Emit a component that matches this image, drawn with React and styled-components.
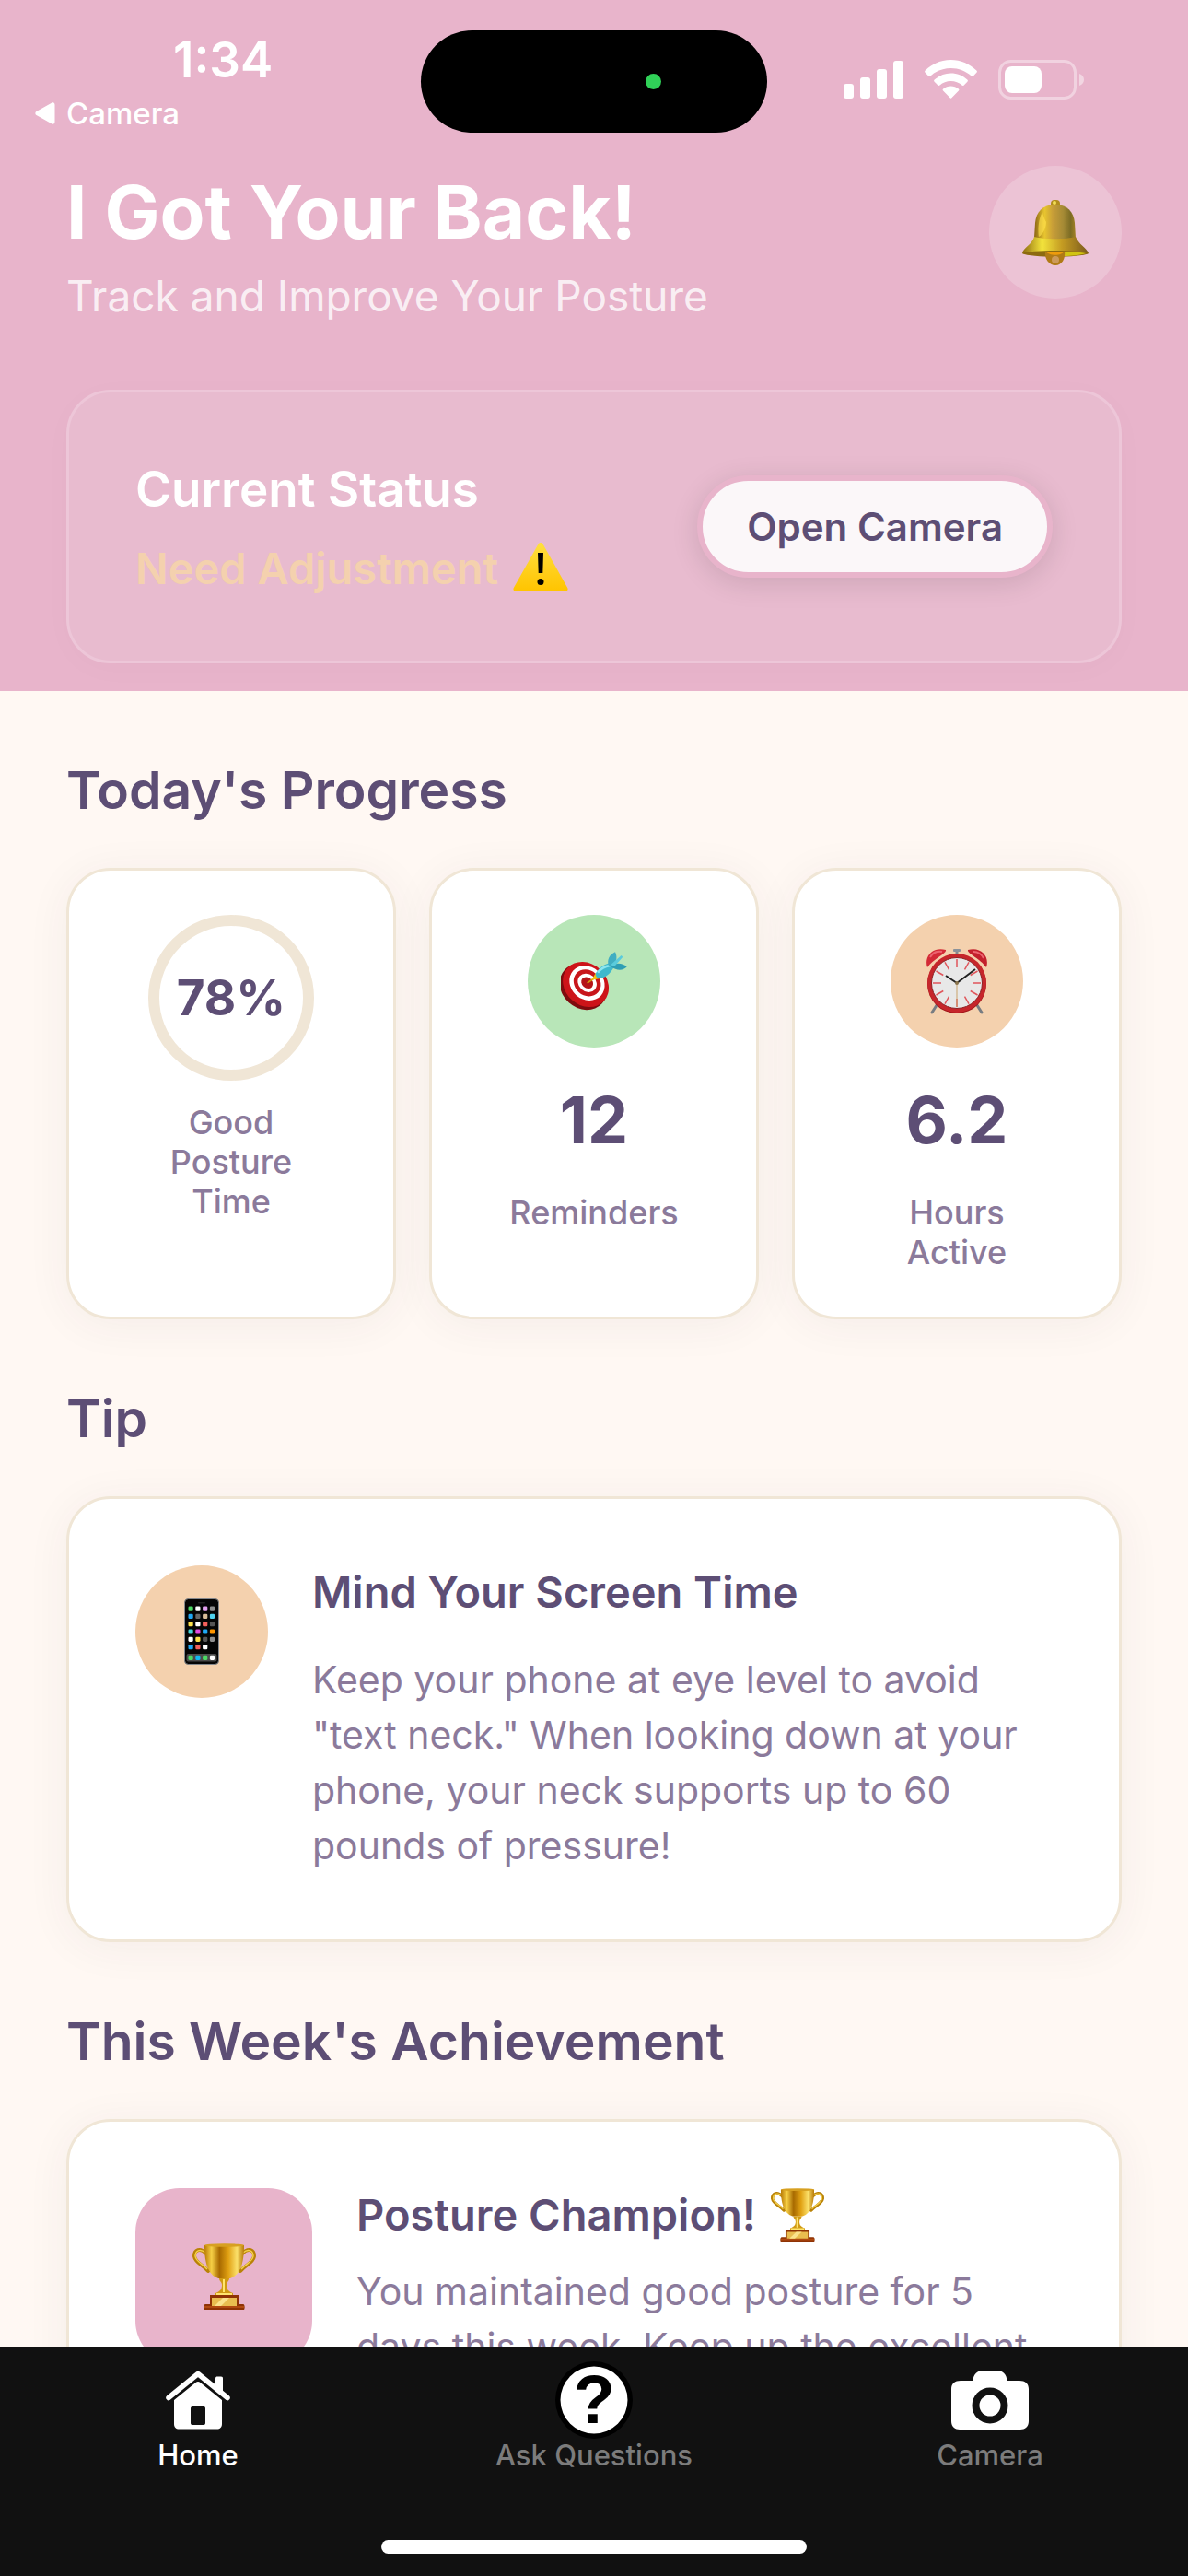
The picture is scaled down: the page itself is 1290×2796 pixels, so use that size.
import styled, { createGlobalStyle } from "styled-components";

function App() {
  return (
    <>
      <GlobalStyle />
      <Screen>
        <Scroll>
          <Header>
            <StatusBar>
              <StatusLeft>
                <Time>1:34</Time>
                <BackLink href="#camera">
                  <BackArrow />
                  Camera
                </BackLink>
              </StatusLeft>
              <Island>
                <IslandDot />
              </Island>
              <StatusRight>
                <SignalIcon />
                <WifiIcon />
                <BatteryIcon />
              </StatusRight>
            </StatusBar>
            <HeaderRow>
              <div>
                <Title>I Got Your Back!</Title>
                <Subtitle>Track and Improve Your Posture</Subtitle>
              </div>
              <BellButton type="button" aria-label="Notifications">
                <BellIcon />
              </BellButton>
            </HeaderRow>
            <StatusCard>
              <div>
                <StatusTitle>Current Status</StatusTitle>
                <StatusText>
                  Need Adjustment
                  <WarningIcon />
                </StatusText>
              </div>
              <CameraButton type="button">Open Camera</CameraButton>
            </StatusCard>
          </Header>
          <Main>
            <SectionTitle>Today's Progress</SectionTitle>
            <ProgressGrid>
              <ProgressCard>
                <Ring>78%</Ring>
                <RingLabel>Good Posture Time</RingLabel>
              </ProgressCard>
              <ProgressCard>
                <Circle $color="#b8e6b8">
                  <TargetIcon />
                </Circle>
                <Value>12</Value>
                <Label>Reminders</Label>
              </ProgressCard>
              <ProgressCard>
                <Circle $color="#f4d1ae">
                  <ClockIcon />
                </Circle>
                <Value>6.2</Value>
                <Label>Hours Active</Label>
              </ProgressCard>
            </ProgressGrid>

            <SectionTitle>Tip</SectionTitle>
            <InfoCard>
              <Circle $color="#f4d1ae">
                <PhoneIcon />
              </Circle>
              <InfoContent $gap="36px">
                <InfoTitle>Mind Your Screen Time</InfoTitle>
                <InfoText>
                  Keep your phone at eye level to avoid "text neck." When
                  looking down at your phone, your neck supports up to 60 pounds
                  of pressure!
                </InfoText>
              </InfoContent>
            </InfoCard>

            <SectionTitle>This Week's Achievement</SectionTitle>
            <InfoCard>
              <Badge>
                <TrophyIcon width="69" height="72" />
              </Badge>
              <InfoContent $gap="24px">
                <InfoTitle>
                  Posture Champion!
                  <TrophyIcon width="58" height="58" />
                </InfoTitle>
                <InfoText>
                  You maintained good posture for 5 days this week. Keep up the
                  excellent
                </InfoText>
              </InfoContent>
            </InfoCard>
          </Main>
        </Scroll>
        <TabBar>
          <Tabs>
            <Tab href="#home" $active>
              <TabIcon>
                <HomeIcon />
              </TabIcon>
              Home
            </Tab>
            <Tab href="#questions">
              <TabIcon>
                <QuestionIcon />
              </TabIcon>
              Ask Questions
            </Tab>
            <Tab href="#camera">
              <TabIcon>
                <CameraIcon />
              </TabIcon>
              Camera
            </Tab>
          </Tabs>
          <HomeIndicator />
        </TabBar>
      </Screen>
    </>
  );
}

export default App;

function BackArrow() {
  return (
    <svg width="22" height="24" viewBox="0 0 22 24" fill="#fff">
      <path d="M18 0.700 1.500 10a2.300 2.300 0 0 0 0 4L18 23.300c2 1 3.500 0 3.500-2V2.700c0-2-1.500-3-3.500-2Z" />
    </svg>
  );
}

function SignalIcon() {
  return (
    <svg width="65" height="42" viewBox="0 0 65 42" fill="#fff">
      <rect x="0" y="26" width="11" height="16" rx="3" />
      <rect x="18" y="19" width="11" height="23" rx="3" />
      <rect x="36" y="10" width="11" height="32" rx="3" />
      <rect x="54" y="1" width="11" height="41" rx="3" />
    </svg>
  );
}

function WifiIcon() {
  return (
    <svg width="57" height="42" viewBox="0 0 57 42" fill="#fff">
      <path d="M28.500 0C39 0 49 4.200 56.300 11.600c.8.800.8 1.500.1 2.200l-3.500 3.600c-.7.700-1.400.7-2.200 0C44.700 12 37 8.900 28.500 8.900S12.300 12 6.300 17.400c-.8.700-1.500.7-2.200 0L.6 13.800c-.7-.7-.7-1.400.1-2.200C8 4.200 18 0 28.500 0Z" />
      <path d="M28.500 14.500c6.700 0 13 2.600 17.800 7 .8.700.8 1.400.1 2.200l-3.700 3.700c-.7.700-1.400.7-2.200.1-3.200-2.800-7.400-4.500-12-4.500s-8.800 1.700-12 4.500c-.8.600-1.500.6-2.200-.1l-3.700-3.700c-.7-.8-.7-1.500.1-2.200 4.800-4.400 11.100-7 17.800-7Z" />
      <path d="M28.500 28.500c3.100 0 6 1.100 8.300 3 .8.700.8 1.400.1 2.100l-7.300 7.500c-.7.700-1.500.7-2.200 0l-7.300-7.500c-.7-.7-.7-1.400.1-2.100 2.300-1.900 5.200-3 8.300-3Z" />
    </svg>
  );
}

function BatteryIcon() {
  return (
    <svg width="94" height="43" viewBox="0 0 94 43">
      <rect x="1.500" y="1.500" width="82" height="40" rx="12" fill="none" stroke="#fff" strokeOpacity="0.4" strokeWidth="3" />
      <rect x="7" y="7" width="40" height="29" rx="8" fill="#fff" />
      <path d="M88 15c3 1 5 3.500 5 6.500S91 27 88 28Z" fill="#fff" fillOpacity="0.45" />
    </svg>
  );
}

function BellIcon() {
  return (
    <svg width="72" height="71" viewBox="0 0 72 71">
      <defs>
        <linearGradient id="bellBody">
          <stop offset="0" stopColor="#8a6414" />
          <stop offset="0.25" stopColor="#e8c52f" />
          <stop offset="0.45" stopColor="#c79d38" />
          <stop offset="0.7" stopColor="#a58a35" />
          <stop offset="0.88" stopColor="#7c6c24" />
          <stop offset="1" stopColor="#a38126" />
        </linearGradient>
        <linearGradient id="bellRim">
          <stop offset="0" stopColor="#8d6a10" />
          <stop offset="0.3" stopColor="#f3e43c" />
          <stop offset="0.6" stopColor="#c49b22" />
          <stop offset="1" stopColor="#7a5a1e" />
        </linearGradient>
      </defs>
      <rect x="31" y="0" width="10" height="9" rx="4" fill="#b18d1d" />
      <rect x="33" y="1" width="4" height="4" rx="2" fill="#f1dc55" />
      <path d="M36 5C22 5 15 13 14 25L13 41c6 6 39 6 45 0L57 25C56 13 49 5 36 5Z" fill="url(#bellBody)" />
      <path d="M13 40C11 48 1 52 0 58c10 4 62 4 72 0-2-6-11-10-14-18-10 3-35 3-45 0Z" fill="url(#bellRim)" />
      <path d="M0 58c8-4 64-4 72 0-10 5-62 5-72 0Z" fill="#8d6a10" />
      <path d="M45 57c9-1 20 0 24 1-6 2-15 3-24 3Z" fill="#d1c413" />
      <path d="M22 13c-5 8-5 22-4 27 5-3 8-10 8-16-2-3-3-7-4-11Z" fill="#ffe14d" opacity="0.65" />
      <path d="M25 56h21c1 8-3 15-10 15s-12-7-11-15Z" fill="#b07a16" />
      <path d="M26 56h19c-2 5-16 5-19 0Z" fill="#ee9b0c" />
      <circle cx="36" cy="65" r="4" fill="#d9a878" opacity="0.7" />
    </svg>
  );
}

function WarningIcon() {
  return (
    <svg width="60" height="54" viewBox="0 0 60 54">
      <defs>
        <linearGradient id="warn" x2="0" y2="1">
          <stop offset="0" stopColor="#ffdf40" />
          <stop offset="1" stopColor="#ffc400" />
        </linearGradient>
      </defs>
      <path d="M27.500 2.500c1-2 4-2 5 0L59.200 50c1 2 0 3.500-2 3.500H2.800c-2 0-3-1.500-2-3.500Z" fill="url(#warn)" />
      <path d="M27 12h6l-.7 22h-4.600Z" fill="#000" />
      <circle cx="30" cy="43.500" r="3.500" fill="#000" />
    </svg>
  );
}

function TargetIcon() {
  return (
    <svg width="72" height="64" viewBox="0 0 216 192">
      <g transform="rotate(42 75 109)">
        <ellipse cx="77" cy="114" rx="82" ry="70" fill="#7e0b0e" />
        <ellipse cx="78" cy="103" rx="80" ry="68" fill="#cd1419" />
        <ellipse cx="78" cy="97" rx="61" ry="53" fill="#fff" />
        <ellipse cx="78" cy="96" rx="47" ry="41" fill="#c8161b" />
        <ellipse cx="78" cy="96" rx="33" ry="28" fill="#fff" />
        <ellipse cx="78" cy="96" rx="21" ry="17" fill="#b51418" />
      </g>
      <path d="M86 102 112 84" stroke="#d39a0c" strokeWidth="5" />
      <path d="m100 92 13-22 16 17Z" fill="#f2c40f" />
      <path d="M113 72c9-18 26-33 53-36l6 16c-12 21-28 34-46 36-8-2-13-8-13-16Z" fill="#3fb9cd" />
      <path d="M120 68c10-13 23-20 40-23" stroke="#8be6ef" strokeWidth="8" fill="none" />
      <path d="M155 44c-5-18 3-34 22-43 7 14 6 33-8 46Z" fill="#40aec2" />
      <path d="M166 45c15-11 36-8 49 4-12 14-34 13-51 0Z" fill="#2f9eb4" />
      <path d="m162 43 35-31 5 5-27 30Z" fill="#5acbdc" />
    </svg>
  );
}

function ClockIcon() {
  const ticks = [0, 30, 60, 90, 120, 150, 180, 210, 240, 270, 300, 330];
  return (
    <svg width="70" height="72" viewBox="0 0 70 72">
      <path d="m15 59-7 11M55 59l7 11" stroke="#777c82" strokeWidth="3" strokeLinecap="round" />
      <path d="M35 3v8" stroke="#858a90" strokeWidth="3" />
      <rect x="31" y="1" width="8" height="3" rx="1" fill="#8b929a" />
      <path d="M3 21C-1 9 9-2 23 2c1 4-13 9-20 19Z" fill="#d32a36" />
      <path d="M67 21C71 9 61-2 47 2c-1 4 13 9 20 19Z" fill="#c3202d" />
      <path d="M6 10c3-5 8-7 13-6M53 4c5 0 9 3 11 7" stroke="#ec6470" strokeWidth="2" fill="none" />
      <circle cx="35" cy="39" r="32" fill="#9f1519" />
      <circle cx="35" cy="38" r="32" fill="#c6262b" />
      <circle cx="35" cy="38" r="27.500" fill="#e8e8e8" stroke="#8b2023" strokeWidth="1" />
      {ticks.map((deg) => (
        <path key={deg} d="M35 12v9" stroke="#e0555b" strokeWidth="1.500" transform={`rotate(${deg} 35 38)`} />
      ))}
      <path d="M35 38v26" stroke="#c9a36a" strokeWidth="1" />
      <path d="m35 38-12-8M35 38l20-15" stroke="#222" strokeWidth="2" />
      <circle cx="35" cy="38" r="2" fill="#8a744c" />
    </svg>
  );
}

const APP_ROWS = [
  ["#4cd964", "#fff", "#e3a0f0", "#8e8e8e"],
  ["#1fa8f5", "#666", "#d8bd98", "#4fd2ee"],
  ["#fbe04b", "#fff", "#f4605c", "#555"],
  ["#44d7dc", "#e24ae0", "#1fa8f5", "#ff9500"],
  ["#fff", "#fbe04b", "#555", "#8e8e8e"],
  ["#1fa8f5", "#f4605c", "#fff"],
];
const DOCK = ["#4cd964", "#13b8f3", "#4cd964", "#fff"];

function PhoneIcon() {
  return (
    <svg width="38" height="72" viewBox="0 0 38 72">
      <rect x="0.500" y="0.500" width="37" height="71" rx="4" fill="#050505" stroke="#85898e" />
      <rect x="15" y="4" width="8" height="1.500" rx="0.700" fill="#222" />
      {APP_ROWS.map((row, r) =>
        row.map((color, c) => (
          <rect key={`${r}-${c}`} x={4.5 + c * 7.8} y={8.5 + r * 8.3} width="5.200" height="5.200" rx="1.300" fill={color} />
        ))
      )}
      <rect x="2.500" y="60" width="33" height="8.500" rx="2" fill="#4a4a4a" />
      {DOCK.map((color, c) => (
        <rect key={c} x={4.5 + c * 7.8} y="61.700" width="5.200" height="5.200" rx="1.300" fill={color} />
      ))}
    </svg>
  );
}

function TrophyIcon({ width, height }) {
  return (
    <svg width={width} height={height} viewBox="0 0 69 72" preserveAspectRatio="none">
      <defs>
        <linearGradient id="cup">
          <stop offset="0" stopColor="#b97a05" />
          <stop offset="0.18" stopColor="#f6cf45" />
          <stop offset="0.38" stopColor="#a86a00" />
          <stop offset="0.6" stopColor="#e0a012" />
          <stop offset="0.82" stopColor="#fbe06a" />
          <stop offset="1" stopColor="#b87a08" />
        </linearGradient>
      </defs>
      <path d="M15 11C8 4 2 7 2 14c1 7 9 9 15 16M54 11c7-7 13-4 13 3-1 7-9 9-15 16" fill="none" stroke="#b98207" strokeWidth="4" strokeLinecap="round" />
      <path d="M14 10C8 5 3 8 3 14c1 6 8 8 13 14M55 10c6-5 11-2 11 4-1 6-8 8-13 14" fill="none" stroke="#f4d04c" strokeWidth="1.500" />
      <path d="M13 2h43c0 17-3 32-15 36H28C16 34 13 19 13 2Z" fill="url(#cup)" />
      <ellipse cx="34.500" cy="2" rx="21.500" ry="1.800" fill="#d7a021" />
      <path d="M29 38h11c0 3-3 4-3 7 0 5 2 7 7 9v3H25v-3c5-2 7-4 7-9 0-3-3-4-3-7Z" fill="#d19a13" />
      <path d="M34 39v14M26 55h17" stroke="#ffe56e" strokeWidth="2" />
      <path d="M19 56h31v10h5c2 0 2 5 1 6H13c-1-1-1-6 1-6h5Z" fill="#8f3305" />
      <path d="M13 68h43v2H13Z" fill="#b14a10" />
      <rect x="21" y="59" width="27" height="9" fill="#e9bd4f" />
      <path d="m24 68 9-9h7l-9 9Z" fill="#fbe28b" />
    </svg>
  );
}

function HomeIcon() {
  return (
    <svg width="70" height="64" viewBox="0 0 70 64">
      <path d="M54 8.500C54 7 55 6.500 56 6.500h4c1.500 0 2 .7 2 2V25l-8-7Z" fill="#fff" />
      <path d="M3 29.500 35 3.500l32 26" fill="none" stroke="#fff" strokeWidth="5.500" strokeLinecap="round" strokeLinejoin="round" />
      <path fillRule="evenodd" d="M32.500 13c1.700-1.500 3.300-1.500 5 0L61 32v26c0 3.500-2 5.500-5.500 5.500h-41C11 63.500 9 61.500 9 58V32ZM29 39c-1 0-2 .7-2 2v16c0 1.300.7 2 2 2h12c1.300 0 2-.7 2-2V41c0-1.300-.7-2-2-2Z" fill="#fff" />
    </svg>
  );
}

function QuestionIcon() {
  return (
    <svg width="84" height="84" viewBox="0 0 84 84">
      <circle cx="42" cy="42" r="42" fill="#000" />
      <circle cx="42" cy="42" r="36.500" fill="#fff" />
      <text x="42" y="67" textAnchor="middle" fontFamily="Liberation Sans, sans-serif" fontWeight="700" fontSize="74">
        ?
      </text>
    </svg>
  );
}

function CameraIcon() {
  return (
    <svg width="84" height="64" viewBox="0 0 84 64">
      <path d="M0 20C0 14 4 11 10 11h13.500C24 4 28 0 34 0h16c6 0 10 4 10.500 11H74c6 0 10 3 10 9v35c0 6-4 9-9 9H9c-5 0-9-3-9-9Z" fill="#fff" />
      <circle cx="42" cy="38" r="19.500" fill="#111" />
      <circle cx="42" cy="38" r="11.500" fill="#fff" />
    </svg>
  );
}

const GlobalStyle = createGlobalStyle`
  * {
    box-sizing: border-box;
  }

  body {
    margin: 0;
    background: #fff8f3;
    font-family: Inter, "Liberation Sans", sans-serif;
  }

  h1, h2, h3, p {
    margin: 0;
  }

  a {
    text-decoration: none;
  }

  svg {
    display: block;
    flex-shrink: 0;
  }
`;

const Screen = styled.div`
  display: flex;
  flex-direction: column;
  height: 100vh;
`;

const Scroll = styled.div`
  flex: 1;
  min-height: 0;
  overflow-y: auto;
  scrollbar-width: none;
`;

const Header = styled.header`
  padding: 0 72px 30px;
  background: #e8b4cb;
`;

const StatusBar = styled.div`
  display: grid;
  grid-template-columns: 1fr 376px 1fr;
  align-items: start;
  height: 180px;
  margin: 0 -72px;
  padding-top: 33px;
  color: #fff;
`;

const StatusLeft = styled.div`
  display: flex;
  flex-direction: column;
  align-items: flex-start;
  gap: 6px;
  padding-left: 38px;
`;

const Time = styled.div`
  margin-left: 150px;
  font-size: 53px;
  font-weight: 600;
  line-height: 64px;
`;

const BackLink = styled.a`
  display: flex;
  align-items: center;
  gap: 12px;
  color: #fff;
  font-size: 33px;
  font-weight: 500;
  line-height: 40px;
`;

const Island = styled.div`
  display: flex;
  align-items: center;
  justify-content: flex-end;
  height: 111px;
  padding-right: 115px;
  border-radius: 56px;
  background: #000;
`;

const IslandDot = styled.span`
  width: 17px;
  height: 17px;
  border-radius: 50%;
  background: #30d158;
`;

const StatusRight = styled.div`
  display: flex;
  gap: 23px;
  padding: 32px 0 0 83px;
`;

const HeaderRow = styled.div`
  display: flex;
  justify-content: space-between;
  align-items: flex-start;
  margin-bottom: 72px;
`;

const Title = styled.h1`
  margin-bottom: 12px;
  color: #fff;
  font-size: 80px;
  font-weight: 700;
  line-height: 100px;
`;

const Subtitle = styled.p`
  color: rgba(255, 255, 255, 0.8);
  font-size: 46px;
  line-height: 59px;
`;

const BellButton = styled.button`
  display: flex;
  align-items: center;
  justify-content: center;
  width: 144px;
  height: 144px;
  padding: 0;
  border: none;
  border-radius: 50%;
  background: rgba(255, 255, 255, 0.2);
`;

const StatusCard = styled.section`
  display: flex;
  justify-content: space-between;
  align-items: center;
  padding: 72px;
  border: 3px solid #edc6d8;
  border-radius: 48px;
  background: #e8bbcf;
  box-shadow: 0 6px 36px rgba(0, 0, 0, 0.02);
`;

const StatusTitle = styled.h2`
  margin-bottom: 24px;
  color: #fff;
  font-size: 53px;
  font-weight: 600;
  line-height: 66px;
`;

const StatusText = styled.p`
  display: flex;
  align-items: flex-start;
  gap: 16px;
  color: #f4d1ae;
  font-size: 47px;
  font-weight: 600;
  line-height: 57px;
`;

const CameraButton = styled.button`
  height: 111px;
  padding: 0 48px;
  border: 6px solid #e8b4cb;
  border-radius: 60px;
  background: #fbf7f9;
  box-shadow: 0 6px 30px rgba(0, 0, 0, 0.12);
  color: #5d4e75;
  font-family: inherit;
  font-size: 42px;
  font-weight: 600;
`;

const Main = styled.main`
  padding: 0 72px 72px;
`;

const SectionTitle = styled.h2`
  padding: 72px 0 48px;
  color: #5d4e75;
  font-size: 57px;
  font-weight: 600;
  line-height: 72px;
`;

const Card = styled.section`
  border: 3px solid #f0e6d6;
  border-radius: 48px;
  background: #fff;
  box-shadow: 0 6px 48px rgba(60, 50, 60, 0.06);
`;

const ProgressGrid = styled.div`
  display: grid;
  grid-template-columns: repeat(3, 1fr);
  gap: 36px;
`;

const ProgressCard = styled(Card)`
  display: flex;
  flex-direction: column;
  align-items: center;
  padding: 48px;
`;

const Ring = styled.div`
  display: flex;
  align-items: center;
  justify-content: center;
  width: 180px;
  height: 180px;
  border: 12px solid #f0e6d6;
  border-radius: 50%;
  color: #5d4e75;
  font-size: 53px;
  font-weight: 700;
`;

const Circle = styled.div`
  display: flex;
  flex-shrink: 0;
  align-items: center;
  justify-content: center;
  width: 144px;
  height: 144px;
  border-radius: 50%;
  background: ${({ $color }) => $color};
`;

const Value = styled.div`
  margin-top: 36px;
  color: #5d4e75;
  font-size: 70px;
  font-weight: 700;
  line-height: 86px;
`;

const Label = styled.div`
  max-width: 200px;
  margin-top: 36px;
  color: #8b7a9b;
  font-size: 36px;
  font-weight: 500;
  line-height: 43px;
  text-align: center;
`;

const RingLabel = styled(Label)`
  margin-top: 24px;
`;

const InfoCard = styled(Card)`
  display: flex;
  align-items: flex-start;
  gap: 48px;
  padding: 72px;
`;

const Badge = styled.div`
  display: flex;
  flex-shrink: 0;
  align-items: center;
  justify-content: center;
  width: 192px;
  height: 192px;
  border-radius: 48px;
  background: #e8b4cb;
`;

const InfoContent = styled.div`
  display: flex;
  flex: 1;
  flex-direction: column;
  gap: ${({ $gap }) => $gap};
`;

const InfoTitle = styled.h3`
  display: flex;
  gap: 16px;
  color: #5d4e75;
  font-size: 47px;
  font-weight: 600;
  line-height: 58px;
`;

const InfoText = styled.p`
  color: #8b7a9b;
  font-size: 41px;
  line-height: 60px;
`;

const TabBar = styled.nav`
  display: flex;
  flex-direction: column;
  flex-shrink: 0;
  justify-content: space-between;
  align-items: center;
  height: 249px;
  padding: 16px 0 24px;
  background: #111;
`;

const Tabs = styled.div`
  display: grid;
  grid-template-columns: repeat(3, 1fr);
  width: 100%;
`;

const Tab = styled.a`
  display: flex;
  flex-direction: column;
  align-items: center;
  color: ${({ $active }) => ($active ? "#fff" : "#7c7c7c")};
  font-size: 31px;
  font-weight: 500;
  line-height: 36px;
`;

const TabIcon = styled.span`
  display: flex;
  align-items: center;
  height: 84px;
`;

const HomeIndicator = styled.div`
  width: 462px;
  height: 15px;
  border-radius: 8px;
  background: #fff;
`;
